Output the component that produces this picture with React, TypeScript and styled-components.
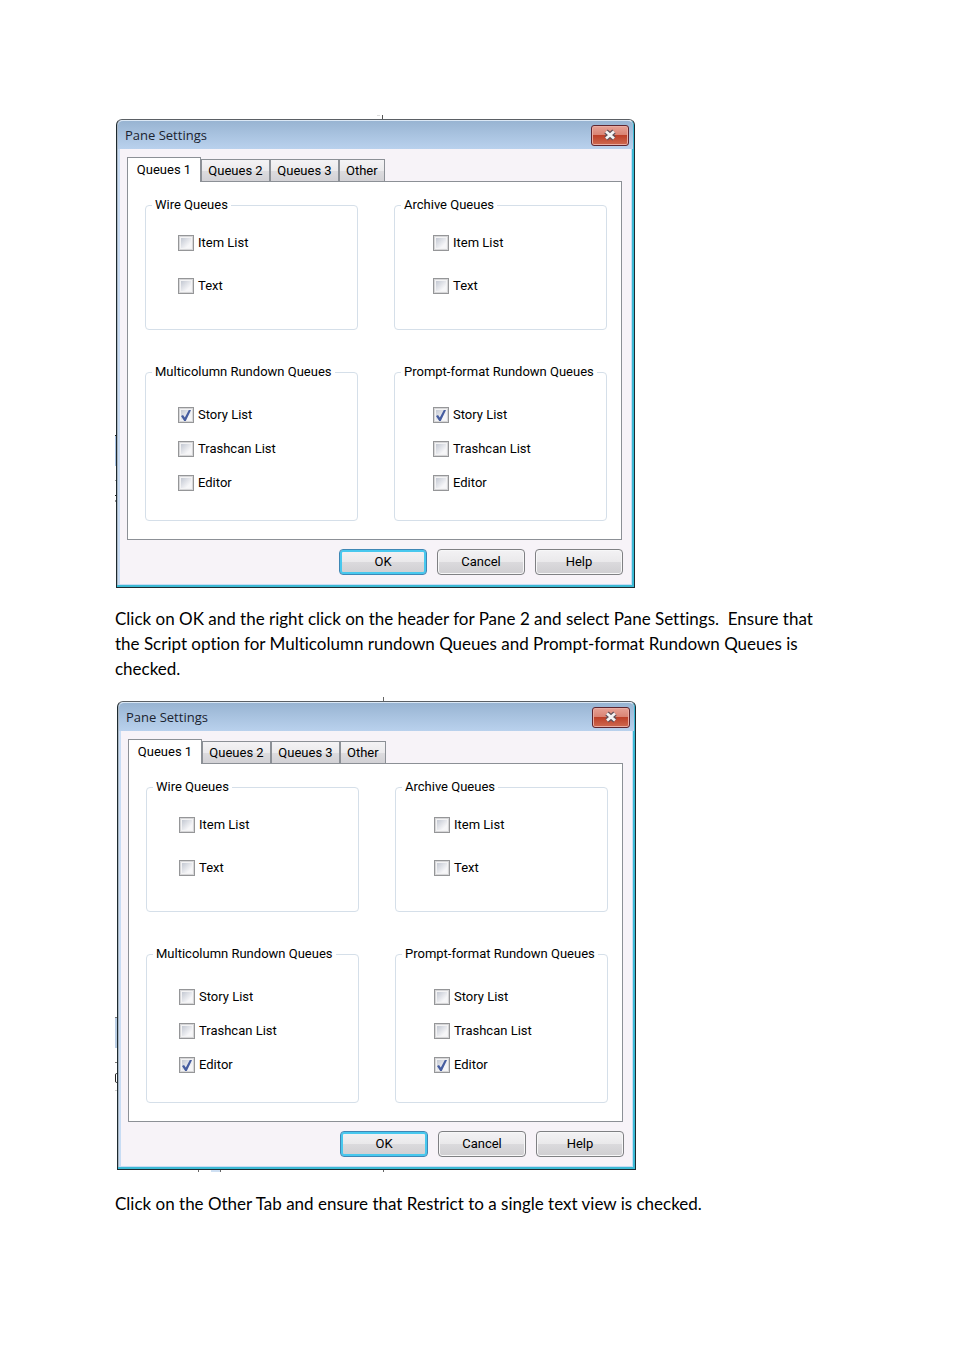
import React, { useId } from 'react';
import styled, { createGlobalStyle, css } from 'styled-components';

const GlobalStyle = createGlobalStyle`
  *, *::before, *::after { box-sizing: border-box; }
  body { margin: 0; background: #fff; color: #000; }
`;

const Page = styled.main`
  padding: 115px 115px 130px;
`;

const Paragraph = styled.p`
  margin: 0;
  padding: 18px 0 16px;
  font: 17px/25px Lato, sans-serif;
  font-variant-ligatures: none;
`;

const Figure = styled.figure<{ $inset: string }>`
  position: relative;
  margin: 0;
  padding: ${(p) => p.$inset};
`;

/* Slivers of the application window that show around the dialog's edges. */
const Backdrop = styled.svg`
  position: absolute;
  top: 0;
  left: 0;
  z-index: -1;
`;

const Dialog = styled.section`
  max-width: 519px;
  padding: 0 3px 12px;
  border: 1px solid #1d2a30;
  border-top-color: #5b6065;
  border-radius: 6px 6px 0 0;
  background: #f7f3f8;
  box-shadow:
    inset -2px -2px 0 #3bb9d4,
    inset 1px 0 0 #aab6c2,
    inset -3px -3px 0 #c8dcf4,
    inset 3px 0 0 #c8dcf4;
  font: 13px/16px Roboto, sans-serif;
`;

const TitleBar = styled.header`
  display: flex;
  align-items: center;
  justify-content: space-between;
  height: 29px;
  margin: 0 -2px;
  padding: 0 4px 0 7px;
  border-top: 1px solid #dbe8f5;
  border-radius: 5px 5px 0 0;
  background: linear-gradient(#98b4d2, #a9c3e0 50%, #b9d1ed);
`;

const Title = styled.h2`
  margin: 0;
  font: 13px/20px "Open Sans", sans-serif;
  color: #1a2330;
`;

const CloseButton = styled.button`
  display: flex;
  align-items: center;
  justify-content: center;
  width: 38px;
  height: 21px;
  padding: 0;
  border: 1px solid #5e2630;
  border-radius: 3px;
  background: linear-gradient(#e6a195, #d98373 48%, #bd4029 50%, #cf6a50);
  box-shadow: inset 0 0 0 1px #e9aca2;
`;

const Body = styled.div`
  padding: 8px 9px 0 7px;
`;

const TabList = styled.div`
  display: flex;
  align-items: flex-end;
`;

const Tab = styled.button<{ $active?: boolean }>`
  height: 22px;
  padding: 1px 6px 0;
  border: 1px solid #8c9096;
  border-bottom: 0;
  background: linear-gradient(#f4f3f5, #ebeaec 50%, #dddcdf 52%, #d2d1d5);
  font: inherit;
  color: #000;

  &:nth-child(2), &:nth-child(3) { width: 69px; }

  ${(p) =>
    p.$active &&
    css`
      position: relative;
      width: 74px;
      height: 25px;
      margin-bottom: -1px;
      padding-top: 0;
      background: #fff;
    `}
`;

const Panel = styled.div`
  display: grid;
  grid-template-columns: 1fr 1fr;
  gap: 34px 36px;
  padding: 15px 14px 18px 17px;
  border: 1px solid #8c9096;
  background: #fff;
`;

const Group = styled.fieldset`
  min-width: 0;
  margin: 0;
  padding: 0;
  border: 1px solid #d5dfe9;
  border-radius: 4px;
`;

const Legend = styled.legend`
  margin-left: 6px;
  padding: 0 3px;
  white-space: nowrap;
`;

const Options = styled.div<{ $roomy: boolean; $indent: number }>`
  display: flex;
  flex-direction: column;
  align-items: flex-start;
  gap: ${(p) => (p.$roomy ? 27 : 18)}px;
  padding: ${(p) => (p.$roomy ? '22px 0 35px' : '27px 0 29px')};
  padding-left: ${(p) => p.$indent}px;
`;

const Option = styled.label`
  display: flex;
  align-items: center;
  gap: 4px;
`;

const CheckBox = styled.input`
  appearance: none;
  display: grid;
  place-items: center;
  width: 16px;
  height: 16px;
  margin: 0;
  border: 1px solid #959698;
  background: linear-gradient(135deg, #c3c8d2, #f6f6f8 75%) content-box, #f3f3f4;
  padding: 2px;
  box-shadow: inset 0 0 0 1px #d6d6d8;

  &:checked::after {
    content: "";
    width: 10px;
    height: 11px;
    background: #465da0;
    clip-path: polygon(0 55%, 20% 45%, 38% 68%, 78% 0, 100% 0, 48% 100%, 32% 100%);
  }
`;

const Footer = styled.footer`
  display: flex;
  justify-content: flex-end;
  gap: 10px;
  padding: 9px 8px 0;
`;

const PushButton = styled.button<{ $primary?: boolean }>`
  width: 88px;
  height: 26px;
  padding: 0;
  border: 1px solid ${(p) => (p.$primary ? '#3f87b5' : '#7f8083')};
  border-radius: 4px;
  background: linear-gradient(#f3f2f4, #eae9eb 48%, #dbdadd 50%, #cfced1);
  box-shadow: inset 0 0 0 ${(p) => (p.$primary ? '2px #48c8ee' : '1px #f7f7f8')};
  font: inherit;
  color: #000;
`;

type GroupData = { name: string; options: string[]; roomy?: boolean; indent: number };

const groups: GroupData[] = [
  { name: 'Wire Queues', options: ['Item List', 'Text'], roomy: true, indent: 32 },
  { name: 'Archive Queues', options: ['Item List', 'Text'], roomy: true, indent: 38 },
  { name: 'Multicolumn Rundown Queues', options: ['Story List', 'Trashcan List', 'Editor'], indent: 32 },
  { name: 'Prompt-format Rundown Queues', options: ['Story List', 'Trashcan List', 'Editor'], indent: 38 },
];

function CloseIcon() {
  return (
    <svg width="14" height="12" viewBox="0 0 14 12" aria-hidden="true">
      <path d="M3 2.5 11 9.5M11 2.5 3 9.5" stroke="#5f5058" strokeWidth="5" />
      <path d="M3 2.5 11 9.5M11 2.5 3 9.5" stroke="#f4f4f4" strokeWidth="2.8" />
    </svg>
  );
}

function PaneSettings({ checked }: { checked: string }) {
  const id = useId();
  return (
    <Dialog role="dialog" aria-labelledby={id}>
      <TitleBar>
        <Title id={id}>Pane Settings</Title>
        <CloseButton type="button" aria-label="Close">
          <CloseIcon />
        </CloseButton>
      </TitleBar>
      <Body>
        <TabList role="tablist">
          <Tab type="button" role="tab" aria-selected="true" $active>Queues 1</Tab>
          <Tab type="button" role="tab" aria-selected="false">Queues 2</Tab>
          <Tab type="button" role="tab" aria-selected="false">Queues 3</Tab>
          <Tab type="button" role="tab" aria-selected="false">Other</Tab>
        </TabList>
        <Panel role="tabpanel">
          {groups.map((group) => (
            <Group key={group.name}>
              <Legend>{group.name}</Legend>
              <Options $roomy={!!group.roomy} $indent={group.indent}>
                {group.options.map((option) => (
                  <Option key={option}>
                    <CheckBox type="checkbox" defaultChecked={option === checked} />
                    {option}
                  </Option>
                ))}
              </Options>
            </Group>
          ))}
        </Panel>
      </Body>
      <Footer>
        <PushButton type="button" $primary>OK</PushButton>
        <PushButton type="button">Cancel</PushButton>
        <PushButton type="button">Help</PushButton>
      </Footer>
    </Dialog>
  );
}

export default function App() {
  return (
    <>
      <GlobalStyle />
      <Page>
        <Figure $inset="4px 0 0 1px">
          <Backdrop width="521" height="473" aria-hidden="true">
            <path d="M267.5 0v4" stroke="#555" />
            <path d="M262 .5h3" stroke="#ddd" />
            <path d="M0 320.5h2M0 380.5h2M0 386h2" stroke="#222" />
            <path d="M0 321h2v30H0z" fill="#a9c3e3" />
            <path d="M0 365.5h2" stroke="#999" />
          </Backdrop>
          <PaneSettings checked="Story List" />
        </Figure>
        <Paragraph>
          Click on OK and the right click on the header for Pane 2 and select Pane Settings.&nbsp; Ensure that
          the Script option for Multicolumn rundown Queues and Prompt-format Rundown Queues is checked.
        </Paragraph>
        <Figure $inset="4px 0 3px 2px">
          <Backdrop width="521" height="475" aria-hidden="true">
            <path d="M268.5 0v4M268.5 472v3M83.5 472v3M105.5 472v3" stroke="#666" />
            <path d="M96 472h9v3h-9z" fill="#cfe0f3" />
            <path d="M0 320.5h3M0 365.5h3" stroke="#777" />
            <path d="M0 321h3v30H0z" fill="#b9cde4" />
            <path d="M3 376.5H1.500Q.5 376.5 .5 378v6q0 1.500 1 1.500H3" stroke="#222" fill="none" />
            <path d="M0 393.5h3" stroke="#ccc" />
          </Backdrop>
          <PaneSettings checked="Editor" />
        </Figure>
        <Paragraph>Click on the Other Tab and ensure that Restrict to a single text view is checked.</Paragraph>
      </Page>
    </>
  );
}
